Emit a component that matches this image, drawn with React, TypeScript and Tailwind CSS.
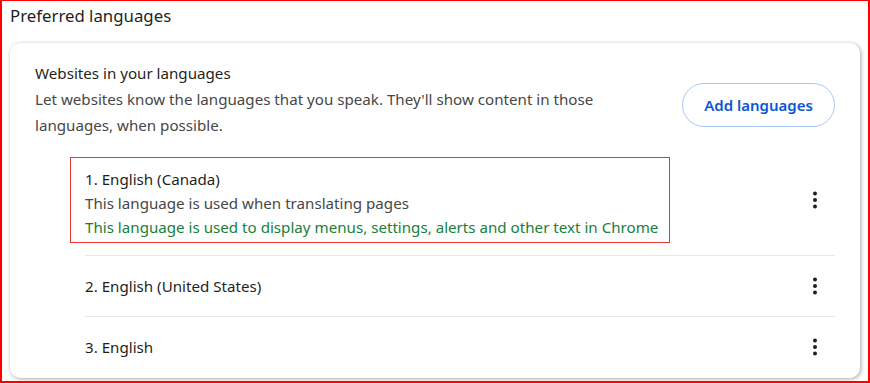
import React from 'react';

type Lang = { name: string; notes?: { text: string; tone: 'muted' | 'green' }[]; highlighted?: boolean };

const LANGUAGES: Lang[] = [
  {
    name: '1. English (Canada)',
    highlighted: true,
    notes: [
      { text: 'This language is used when translating pages', tone: 'muted' },
      { text: 'This language is used to display menus, settings, alerts and other text in Chrome', tone: 'green' },
    ],
  },
  { name: '2. English (United States)' },
  { name: '3. English' },
];

function MoreIcon() {
  return (
    <button className="flex h-10 w-10 shrink-0 items-center justify-center rounded-full text-[#1f1f1f]">
      <svg width="24" height="24" viewBox="0 0 24 24" fill="currentColor">
        <circle cx="12" cy="5.5" r="2" />
        <circle cx="12" cy="12" r="2" />
        <circle cx="12" cy="18.5" r="2" />
      </svg>
    </button>
  );
}

function LanguageRow({ lang, first }: { lang: Lang; first: boolean }) {
  const body = (
    <div className="flex flex-col">
      <span className="text-[#1f1f1f]">{lang.name}</span>
      {lang.notes?.map((n) => (
        <span key={n.text} className={n.tone === 'green' ? 'text-[#188038]' : 'text-[#474747]'}>
          {n.text}
        </span>
      ))}
    </div>
  );

  return (
    <div
      className={`flex items-center justify-between ${
        first ? 'pb-[12px] pt-[7px] leading-[24px]' : 'min-h-[61px] border-t border-[#e6e6e6] leading-[25px]'
      }`}
    >
      {lang.highlighted ? (
        <div className="-ml-[15px] w-fit border border-[#e53935] pb-[3px] pl-[14px] pr-[11px] pt-[9px]">{body}</div>
      ) : (
        body
      )}
      <MoreIcon />
    </div>
  );
}

export default function App() {
  return (
    <div
      className="h-[383px] w-[870px] overflow-hidden border-b-2 border-l-2 border-r-2 border-t border-[#ff0000] bg-white pl-2 pr-[6px]"
      style={{ fontFamily: '"Noto Sans", "Open Sans", sans-serif' }}
    >
      <h2 className="h-[42px] pt-[1px] text-[16.8px] leading-[28px] text-[#1f1f1f]">Preferred languages</h2>

      <div className="h-[335px] w-[850px] rounded-[10px] bg-white px-[25px] pt-[17px] text-[15.15px] shadow-[1px_1px_4px_rgba(0,0,0,0.35)]">
        <div className="flex justify-between leading-[26px]">
          <div className="flex flex-col">
            <span className="text-[#1f1f1f]">Websites in your languages</span>
            <span className="max-w-[600px] text-[#474747]">
              Let websites know the languages that you speak. They'll show content in those languages, when possible.
            </span>
          </div>
          <button className="mt-[23px] h-[44px] w-[153px] shrink-0 rounded-full border border-[#a8c7fa] text-[15px] font-semibold text-[#0b57d0]">
            Add languages
          </button>
        </div>

        <div className="mt-[12px] pl-[50px]">
          {LANGUAGES.map((l, i) => (
            <LanguageRow key={l.name} lang={l} first={i === 0} />
          ))}
        </div>
      </div>
    </div>
  );
}
